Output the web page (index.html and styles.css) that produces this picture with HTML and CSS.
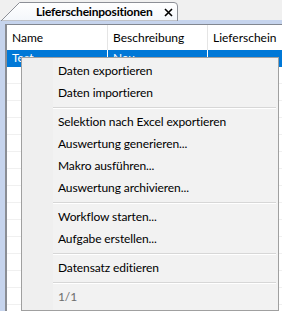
FILE: index.html
```html
<!DOCTYPE html>
<html>
<head>
<meta charset="utf-8">
<link rel="stylesheet" href="styles.css">
</head>
<body>
<div class="window">
  <div class="tabstrip">
    <div class="tab">
      <svg class="tab-shape" width="180" height="21" viewBox="0 0 180 21">
        <defs>
          <linearGradient id="tg" x1="0" y1="0" x2="0" y2="1">
            <stop offset="0" stop-color="#ffffff"/>
            <stop offset="1" stop-color="#f3f6fb"/>
          </linearGradient>
        </defs>
        <path d="M1 21 L19.5 2.5 H174 Q177.5 2.5 177.5 6 V21 Z" fill="url(#tg)" stroke="#8c8f96" stroke-width="1"/>
      </svg>
      <span class="tab-title">Lieferscheinpositionen</span>
      <svg class="tab-close" width="9" height="9" viewBox="0 0 9 9">
        <path d="M1 1 L8 8 M8 1 L1 8" stroke="#000" stroke-width="1.6"/>
      </svg>
    </div>
  </div>
  <div class="band"></div>
  <div class="panel">
    <div class="grid">
      <div class="row head">
        <div class="cell c1">Name</div>
        <div class="cell c2">Beschreibung</div>
        <div class="cell c3">Lieferschein</div>
      </div>
      <div class="row sel">
        <div class="cell c1">Test</div>
        <div class="cell c2">Neu</div>
        <div class="cell c3"></div>
      </div>
      <div class="row"><div class="cell c1"></div><div class="cell c2"></div><div class="cell c3"></div></div>
      <div class="row"><div class="cell c1"></div><div class="cell c2"></div><div class="cell c3"></div></div>
      <div class="row"><div class="cell c1"></div><div class="cell c2"></div><div class="cell c3"></div></div>
      <div class="row"><div class="cell c1"></div><div class="cell c2"></div><div class="cell c3"></div></div>
      <div class="row"><div class="cell c1"></div><div class="cell c2"></div><div class="cell c3"></div></div>
      <div class="row"><div class="cell c1"></div><div class="cell c2"></div><div class="cell c3"></div></div>
      <div class="row"><div class="cell c1"></div><div class="cell c2"></div><div class="cell c3"></div></div>
      <div class="row"><div class="cell c1"></div><div class="cell c2"></div><div class="cell c3"></div></div>
      <div class="row"><div class="cell c1"></div><div class="cell c2"></div><div class="cell c3"></div></div>
      <div class="row"><div class="cell c1"></div><div class="cell c2"></div><div class="cell c3"></div></div>
      <div class="row"><div class="cell c1"></div><div class="cell c2"></div><div class="cell c3"></div></div>
      <div class="row"><div class="cell c1"></div><div class="cell c2"></div><div class="cell c3"></div></div>
      <div class="row"><div class="cell c1"></div><div class="cell c2"></div><div class="cell c3"></div></div>
      <div class="row"><div class="cell c1"></div><div class="cell c2"></div><div class="cell c3"></div></div>
    </div>
  </div>
  <div class="menu">
    <div class="item">Daten exportieren</div>
    <div class="item">Daten importieren</div>
    <div class="sep"></div>
    <div class="item">Selektion nach Excel exportieren</div>
    <div class="item">Auswertung generieren...</div>
    <div class="item">Makro ausführen...</div>
    <div class="item">Auswertung archivieren...</div>
    <div class="sep"></div>
    <div class="item">Workflow starten...</div>
    <div class="item">Aufgabe erstellen...</div>
    <div class="sep"></div>
    <div class="item">Datensatz editieren</div>
    <div class="sep"></div>
    <div class="item disabled">1/1</div>
  </div>
</div>
</body>
</html>
```
FILE: styles.css
```css
html, body {
  margin: 0;
  padding: 0;
  width: 282px;
  height: 311px;
  overflow: hidden;
  background: #f0f0f0;
}
.window {
  position: relative;
  width: 282px;
  height: 311px;
  font-family: Lato, "Noto Sans", sans-serif;
  font-size: 12px;
  color: #000;
  display: flex;
  flex-direction: column;
}
.tabstrip {
  height: 20px;
  display: flex;
  flex: none;
}
.tab {
  position: relative;
  width: 180px;
  height: 20px;
  display: flex;
  align-items: center;
  flex: none;
}
.tab-shape {
  position: absolute;
  left: 0;
  top: 0;
}
.tab-title {
  position: relative;
  margin-left: 36px;
  font-weight: bold;
  font-size: 12px;
  letter-spacing: -0.2px;
  line-height: 20px;
  padding-top: 3px;
  white-space: nowrap;
}
.tab-close {
  position: relative;
  flex: none;
  margin-left: 11px;
  margin-top: 5px;
}
.band {
  height: 4px;
  flex: none;
  background: #c6d4ed;
}
.panel {
  flex: 1;
  display: flex;
  background: #c6d4ed;
  padding-left: 5px;
}
.grid {
  flex: 1;
  background: #fff;
  border-top: 1px solid #828790;
  border-left: 2px solid #8a8d94;
}
.row {
  display: flex;
  height: 16px;
  border-bottom: 1px solid #f0f0f0;
}
.row.head {
  height: 25px;
  border-bottom: none;
  align-items: center;
}
.cell {
  box-sizing: border-box;
  padding-left: 5px;
  border-right: 1px solid #f0f0f0;
  line-height: 16px;
  white-space: nowrap;
  overflow: hidden;
}
.row.head .cell {
  height: 25px;
  line-height: 25px;
  border-right-color: #e5e5e5;
}
.c1 { width: 101px; }
.c2 { width: 100px; }
.c3 { flex: 1; border-right: none; }
.row.sel {
  background: #0078d7;
  color: #fff;
  border-bottom-color: #0078d7;
}
.row.sel .cell { border-right-color: #fff; }
.menu {
  position: absolute;
  left: 21px;
  top: 57px;
  width: 258px;
  box-sizing: border-box;
  border: 1px solid #a0a0a0;
  background: linear-gradient(to right, #efefef 0, #efefef 31px, #f2f2f2 31px);
  padding: 2px 0;
}
.item {
  height: 22px;
  line-height: 22px;
  padding-left: 36px;
  letter-spacing: -0.1px;
  white-space: nowrap;
}
.item.disabled { color: #6d6d6d; }
.sep {
  height: 0;
  margin: 3px 2px 2px 31px;
  border-top: 1px solid #d7d7d7;
  border-bottom: 1px solid #ffffff;
}
```
